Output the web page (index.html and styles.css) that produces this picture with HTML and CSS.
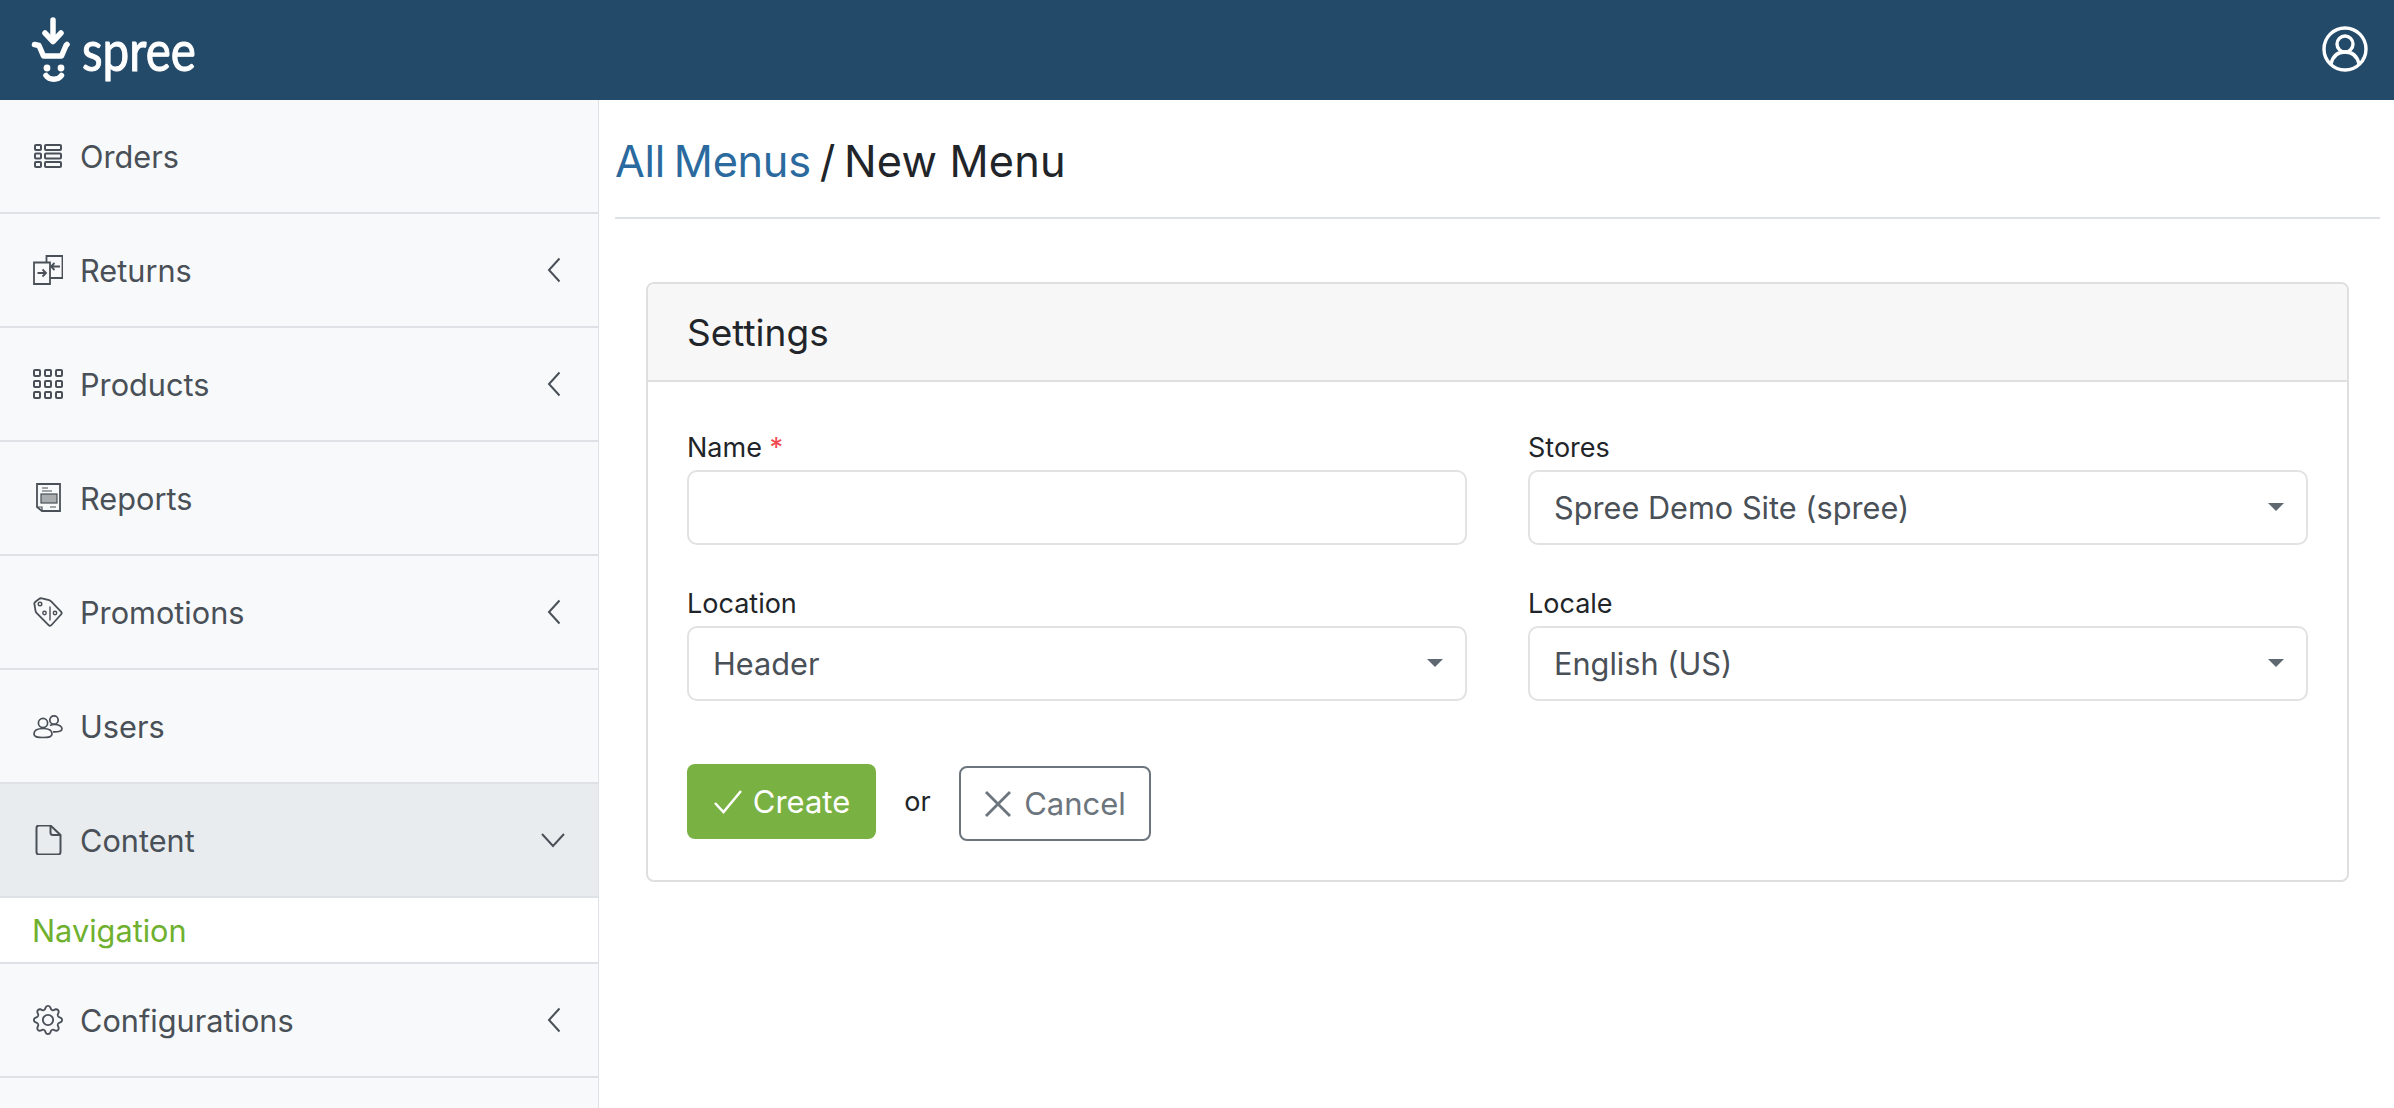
FILE: index.html
```html
<!DOCTYPE html>
<html lang="en">
<head>
  <meta charset="UTF-8" />
  <title>New Menu</title>
  <link rel="stylesheet" href="styles.css">
</head>
<body>

  <header class="topbar">
    <a class="brand" href="#">
      <svg class="brand-mark" viewBox="0 0 40 70" fill="none" stroke="#fff" stroke-linecap="round" stroke-linejoin="round">
        <path d="M22 5v20" stroke-width="5.500"/>
        <path d="M14 18l8 8.500 8-8.500" stroke-width="5.500"/>
        <path d="M3.500 29.500l4.500 1 4.500 10.500h18L35 30.500l1-1" stroke-width="5.500"/>
        <circle cx="16" cy="53" r="3.400" fill="#fff" stroke="none"/>
        <circle cx="30" cy="53" r="3.400" fill="#fff" stroke="none"/>
        <path d="M15 60.500c3.500 5 12 5 15.500 0" stroke-width="5.500"/>
      </svg>
      <span class="brand-name">spree</span>
    </a>
    <svg class="user-icon" viewBox="0 0 46 46" fill="none" stroke="#fff" stroke-width="3.400">
      <circle cx="23" cy="23" r="21"/>
      <circle cx="23" cy="18" r="8"/>
      <path d="M9 38c2-9 8-12 14-12s12 3 14 12"/>
    </svg>
  </header>

  <div class="layout">
    <nav class="sidebar">
      <a class="nav-row" href="#">
        <svg class="nav-icon" viewBox="0 0 30 30" fill="none" stroke="currentColor" stroke-width="2">
          <rect x="2" y="4" width="6" height="5" rx="1"/><rect x="2" y="12.5" width="6" height="5" rx="1"/><rect x="2" y="21" width="6" height="5" rx="1"/>
          <rect x="12" y="4" width="16" height="5" rx="1"/><rect x="12" y="12.5" width="16" height="5" rx="1"/><rect x="12" y="21" width="16" height="5" rx="1"/>
        </svg>
        <span>Orders</span>
      </a>
      <a class="nav-row" href="#">
        <svg class="nav-icon" viewBox="0 0 30 30" fill="none" stroke="currentColor" stroke-width="1.800">
          <path d="M1 7.500h16v21.500H1z"/>
          <path d="M13.500 7.500V1h16v22H17"/>
          <path d="M4.500 18h8M9.500 14.500l3.500 3.500-3.500 3.500"/>
          <path d="M27 11.500h-9M21.500 8l-3.500 3.500 3.500 3.500"/>
        </svg>
        <span>Returns</span>
        <svg class="chevron" viewBox="0 0 14 26" fill="none" stroke="currentColor" stroke-width="2"><path d="M12.500 1.500L2 13l10.500 11.500"/></svg>
      </a>
      <a class="nav-row" href="#">
        <svg class="nav-icon" viewBox="0 0 30 30" fill="none" stroke="currentColor" stroke-width="2">
          <rect x="1" y="1" width="6" height="6" rx="1"/><rect x="12" y="1" width="6" height="6" rx="1"/><rect x="23" y="1" width="6" height="6" rx="1"/>
          <rect x="1" y="12" width="6" height="6" rx="1"/><rect x="12" y="12" width="6" height="6" rx="1"/><rect x="23" y="12" width="6" height="6" rx="1"/>
          <rect x="1" y="23" width="6" height="6" rx="1"/><rect x="12" y="23" width="6" height="6" rx="1"/><rect x="23" y="23" width="6" height="6" rx="1"/>
        </svg>
        <span>Products</span>
        <svg class="chevron" viewBox="0 0 14 26" fill="none" stroke="currentColor" stroke-width="2"><path d="M12.500 1.500L2 13l10.500 11.500"/></svg>
      </a>
      <a class="nav-row" href="#">
        <svg class="nav-icon" viewBox="0 0 30 30" fill="none" stroke="currentColor" stroke-width="1.800">
          <path d="M5 1h22v27H9l-5-4V1z"/>
          <path d="M4 24h5v4" stroke-width="1.200"/>
          <path d="M9 5h6M9 8h10M17 24h6" stroke-width="1.200"/>
          <rect x="8" y="11" width="16" height="9" fill="currentColor" fill-opacity=".45" stroke-width="1.200"/>
        </svg>
        <span>Reports</span>
      </a>
      <a class="nav-row" href="#">
        <svg class="nav-icon" viewBox="0 0 30 30" fill="none" stroke="currentColor" stroke-width="1.800">
          <path d="M1.500 7.500c-.5-1 0-2 1-2.800L6 2c1-.8 2-.9 3-.6l7 1.800c1 .3 1.700.7 2.400 1.400l9.600 10c.9 1 .9 2 0 2.900l-9.500 10.500c-.9 1-2 1-2.900.1L3.500 16c-.6-.7-.9-1.400-1-2.300z"/>
          <circle cx="7" cy="7" r="1.800" stroke-width="1.400"/>
          <circle cx="11.500" cy="16" r="1.700" stroke-width="1.400"/>
          <circle cx="22" cy="16" r="1.700" stroke-width="1.400"/>
          <path d="M17 9.500v14" stroke-width="1.400"/>
        </svg>
        <span>Promotions</span>
        <svg class="chevron" viewBox="0 0 14 26" fill="none" stroke="currentColor" stroke-width="2"><path d="M12.500 1.500L2 13l10.500 11.500"/></svg>
      </a>
      <a class="nav-row" href="#">
        <svg class="nav-icon" viewBox="0 0 30 30" fill="none" stroke="currentColor" stroke-width="1.700">
          <circle cx="10" cy="12" r="4.600"/>
          <circle cx="21" cy="9" r="4.200"/>
          <path d="M1 23c0-3 3-5.500 9-5.500s9 2.500 9 5.500-3 3.500-9 3.500-9-.5-9-3.500z"/>
          <path d="M17 14.500c1.500-.8 3-1 4.500-1 4.500 0 7.500 2 7.500 4.300 0 2.400-3 3.200-9 3"/>
        </svg>
        <span>Users</span>
      </a>
      <a class="nav-row nav-row-open" href="#">
        <svg class="nav-icon" viewBox="0 0 30 30" fill="none" stroke="currentColor" stroke-width="2">
          <path d="M6 0.500h11.500L27.500 10v17a2.500 2.500 0 0 1-2.500 2.500H6A2.500 2.500 0 0 1 3.500 27V3A2.500 2.500 0 0 1 6 0.500z"/>
          <path d="M17.500 .5V7.500a2.500 2.500 0 0 0 2.500 2.500h7.500"/>
        </svg>
        <span>Content</span>
        <svg class="chevron-down" viewBox="0 0 26 16" fill="none" stroke="currentColor" stroke-width="2"><path d="M2 2l11 12L24 2"/></svg>
      </a>
      <a class="nav-sub" href="#">Navigation</a>
      <a class="nav-row" href="#">
        <svg class="nav-icon" viewBox="0 0 16 16" fill="currentColor">
          <path d="M8 4.754a3.246 3.246 0 1 0 0 6.492 3.246 3.246 0 0 0 0-6.492zM5.754 8a2.246 2.246 0 1 1 4.492 0 2.246 2.246 0 0 1-4.492 0z"/>
          <path d="M9.796 1.343c-.527-1.790-3.065-1.790-3.592 0l-.094.319a.873.873 0 0 1-1.255.52l-.292-.16c-1.640-.892-3.433.902-2.540 2.541l.159.292a.873.873 0 0 1-.52 1.255l-.319.094c-1.790.527-1.790 3.065 0 3.592l.319.094a.873.873 0 0 1 .52 1.255l-.16.292c-.892 1.640.901 3.434 2.541 2.540l.292-.159a.873.873 0 0 1 1.255.52l.094.319c.527 1.790 3.065 1.790 3.592 0l.094-.319a.873.873 0 0 1 1.255-.52l.292.16c1.640.893 3.434-.902 2.540-2.541l-.159-.292a.873.873 0 0 1 .52-1.255l.319-.094c1.790-.527 1.790-3.065 0-3.592l-.319-.094a.873.873 0 0 1-.52-1.255l.16-.292c.893-1.640-.902-3.433-2.541-2.540l-.292.159a.873.873 0 0 1-1.255-.52l-.094-.319zm-2.633.283c.246-.835 1.428-.835 1.674 0l.094.319a1.873 1.873 0 0 0 2.693 1.115l.291-.16c.764-.415 1.600.42 1.184 1.185l-.159.292a1.873 1.873 0 0 0 1.116 2.692l.318.094c.835.246.835 1.428 0 1.674l-.319.094a1.873 1.873 0 0 0-1.115 2.693l.16.291c.415.764-.42 1.600-1.185 1.184l-.291-.159a1.873 1.873 0 0 0-2.693 1.116l-.094.318c-.246.835-1.428.835-1.674 0l-.094-.319a1.873 1.873 0 0 0-2.692-1.115l-.292.16c-.764.415-1.600-.42-1.184-1.185l.159-.291A1.873 1.873 0 0 0 1.945 8.930l-.319-.094c-.835-.246-.835-1.428 0-1.674l.319-.094A1.873 1.873 0 0 0 3.060 4.377l-.16-.292c-.415-.764.42-1.600 1.185-1.184l.292.159a1.873 1.873 0 0 0 2.692-1.115l.094-.319z"/>
        </svg>
        <span>Configurations</span>
        <svg class="chevron" viewBox="0 0 14 26" fill="none" stroke="currentColor" stroke-width="2"><path d="M12.500 1.500L2 13l10.500 11.500"/></svg>
      </a>
    </nav>

    <main class="content">
      <h1 class="page-title"><a href="#">All Menus</a> / <span>New Menu</span></h1>

      <section class="card">
        <h2 class="card-header">Settings</h2>
        <form class="card-body">
          <div class="form-grid">
            <div class="field">
              <label for="name">Name <span class="required">*</span></label>
              <input id="name" type="text">
            </div>
            <div class="field">
              <label for="stores">Stores</label>
              <div class="select-wrap">
                <select id="stores"><option>Spree Demo Site (spree)</option></select>
              </div>
            </div>
            <div class="field">
              <label for="location">Location</label>
              <div class="select-wrap">
                <select id="location"><option>Header</option></select>
              </div>
            </div>
            <div class="field">
              <label for="locale">Locale</label>
              <div class="select-wrap">
                <select id="locale"><option>English (US)</option></select>
              </div>
            </div>
          </div>

          <div class="form-actions">
            <button class="btn btn-create" type="button">
              <svg viewBox="0 0 30 26" fill="none" stroke="currentColor" stroke-width="2.500"><path d="M2 14l8.500 9L28 2"/></svg>
              Create
            </button>
            <span class="or">or</span>
            <a class="btn btn-cancel" href="#">
              <svg viewBox="0 0 28 28" fill="none" stroke="currentColor" stroke-width="2.800"><path d="M2 2l24 24M26 2L2 26"/></svg>
              Cancel
            </a>
          </div>
        </form>
      </section>
    </main>
  </div>

</body>
</html>
```

FILE: styles.css
```css
* {
  box-sizing: border-box;
}

body {
  margin: 0;
  height: 1108px;
  overflow: hidden;
  display: flex;
  flex-direction: column;
  background: #fff;
  font-family: Inter, 'Noto Sans', sans-serif;
  color: #212529;
}

a {
  text-decoration: none;
}

.topbar {
  height: 100px;
  flex: none;
  display: flex;
  align-items: center;
  justify-content: space-between;
  padding: 0 26px 0 31px;
  background: #244a6a;
}

.brand {
  display: flex;
  align-items: center;
}

.brand-mark {
  width: 40px;
  height: 70px;
}

.brand-name {
  margin: 0 0 0 11px;
  color: #fff;
  font-family: Lato, sans-serif;
  font-size: 56px;
  line-height: 1;
  -webkit-text-stroke: 1px #fff;
  transform: scaleX(0.85);
  transform-origin: left center;
}

.user-icon {
  width: 46px;
  height: 46px;
  margin-top: -3px;
}

.layout {
  flex: 1;
  display: flex;
  min-height: 0;
}

.sidebar {
  width: 599px;
  flex: none;
  display: flex;
  flex-direction: column;
  background: #f8f9fa;
  border-right: 1px solid #dee2e6;
}

.nav-row {
  height: 114px;
  flex: none;
  display: flex;
  align-items: center;
  padding: 0 33px;
  color: #495057;
  font-size: 30.7px;
  border-bottom: 2px solid #dee2e6;
}

.nav-row-open {
  background: #e9ecef;
}

.nav-icon {
  width: 30px;
  height: 30px;
  flex: none;
  margin-right: 17px;
}

.chevron {
  width: 14px;
  height: 26px;
  margin-left: auto;
  margin-right: 4px;
}

.chevron-down {
  width: 26px;
  height: 16px;
  margin-left: auto;
  margin-right: -1px;
}

.nav-sub {
  height: 66px;
  flex: none;
  display: flex;
  align-items: center;
  padding: 0 32px;
  background: #fff;
  color: #6fb02f;
  font-size: 30.7px;
  border-bottom: 2px solid #dee2e6;
}

.content {
  flex: 1;
  padding: 0 14px 0 16px;
}

.page-title {
  height: 119px;
  margin: 0;
  font-size: 43.3px;
  font-weight: 400;
  letter-spacing: -0.25px;
  word-spacing: -3px;
  line-height: 122px;
  border-bottom: 2px solid #dee2e6;
}

.page-title a {
  color: #2b6a9e;
  letter-spacing: -0.3px;
}

.page-title span {
  letter-spacing: 0.2px;
  word-spacing: 0;
}

.card {
  margin: 63px 31px 0;
  border: 2px solid #dfdfdf;
  border-radius: 8px;
}

.card-header {
  height: 98px;
  margin: 0;
  display: flex;
  align-items: center;
  padding: 0 39px;
  background: #f7f7f7;
  border-bottom: 2px solid #dfdfdf;
  border-radius: 6px 6px 0 0;
  font-size: 37px;
  font-weight: 400;
}

.card-body {
  padding: 48px 39px 39px;
}

.form-grid {
  display: grid;
  grid-template-columns: 1fr 1fr;
  column-gap: 61px;
  row-gap: 41px;
}

.field label {
  display: block;
  height: 36px;
  margin-bottom: 4px;
  font-size: 27px;
  line-height: 36px;
}

.required {
  color: #f0484e;
}

.field input,
.field select {
  display: block;
  width: 100%;
  height: 75px;
  padding: 0 24px;
  background: #fff;
  border: 2px solid #e2e2e2;
  border-radius: 10px;
  color: #495057;
  font-family: inherit;
  font-size: 30.7px;
  outline: none;
  appearance: none;
}

.select-wrap {
  position: relative;
}

.select-wrap::after {
  content: "";
  position: absolute;
  top: 33px;
  right: 24px;
  border-top: 8px solid #5f6871;
  border-left: 8px solid transparent;
  border-right: 8px solid transparent;
}

.form-actions {
  display: flex;
  align-items: flex-start;
  margin-top: 63px;
}

.btn {
  display: inline-flex;
  align-items: center;
  justify-content: center;
  gap: 10px;
  height: 75px;
  border-radius: 8px;
  font-family: inherit;
  font-size: 31px;
}

.btn svg {
  flex: none;
}

.btn-create {
  width: 189px;
  background: #79b142;
  border: 0;
  color: #fff;
}

.btn-create svg {
  width: 30px;
  height: 26px;
}

.or {
  width: 83px;
  text-align: center;
  font-size: 27px;
  line-height: 76px;
}

.btn-cancel {
  width: 192px;
  margin-top: 2px;
  gap: 12px;
  background: #fff;
  border: 2px solid #6c757d;
  color: #6c757d;
}

.btn-cancel svg {
  width: 28px;
  height: 28px;
}
```
